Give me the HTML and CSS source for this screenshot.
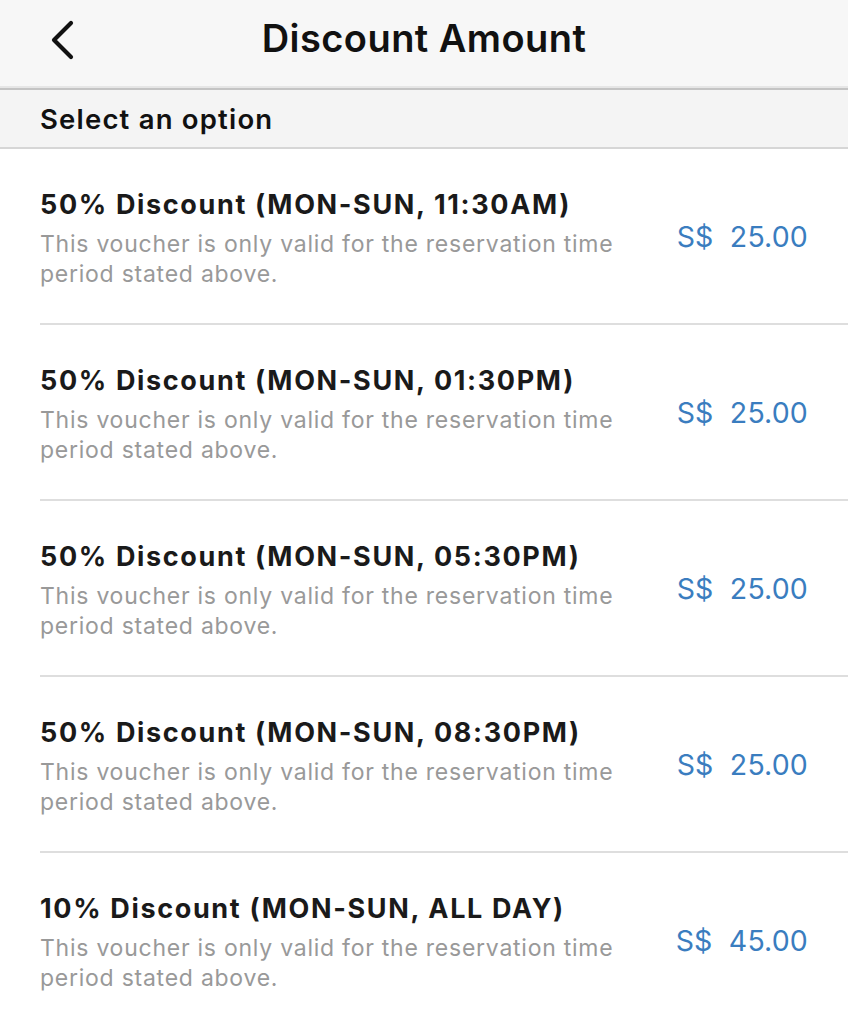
FILE: index.html
```html
<!DOCTYPE html>
<html>
<head>
<meta charset="utf-8">
<link rel="stylesheet" href="styles.css">
</head>
<body>
<div class="screen">
  <header class="navbar">
    <button class="back" aria-label="Back">
      <svg width="30" height="40" viewBox="0 0 30 40"><path d="M22 3 L5 20 L22 37" fill="none" stroke="#111" stroke-width="4.2" stroke-linecap="round" stroke-linejoin="round"/></svg>
    </button>
    <h1 class="title">Discount Amount</h1>
  </header>
  <div class="section">Select an option</div>
  <ul class="list">
    <li class="item">
      <div class="info">
        <div class="name">50% Discount (MON-SUN, 11:30AM)</div>
        <div class="desc">This voucher is only valid for the reservation time period stated above.</div>
      </div>
      <div class="price">S$&nbsp; 25.00</div>
    </li>
    <li class="item">
      <div class="info">
        <div class="name">50% Discount (MON-SUN, 01:30PM)</div>
        <div class="desc">This voucher is only valid for the reservation time period stated above.</div>
      </div>
      <div class="price">S$&nbsp; 25.00</div>
    </li>
    <li class="item">
      <div class="info">
        <div class="name">50% Discount (MON-SUN, 05:30PM)</div>
        <div class="desc">This voucher is only valid for the reservation time period stated above.</div>
      </div>
      <div class="price">S$&nbsp; 25.00</div>
    </li>
    <li class="item">
      <div class="info">
        <div class="name">50% Discount (MON-SUN, 08:30PM)</div>
        <div class="desc">This voucher is only valid for the reservation time period stated above.</div>
      </div>
      <div class="price">S$&nbsp; 25.00</div>
    </li>
    <li class="item">
      <div class="info">
        <div class="name">10% Discount (MON-SUN, ALL DAY)</div>
        <div class="desc">This voucher is only valid for the reservation time period stated above.</div>
      </div>
      <div class="price">S$&nbsp; 45.00</div>
    </li>
  </ul>
</div>
</body>
</html>
```
FILE: styles.css
```css
* { box-sizing: border-box; }
html, body { margin: 0; padding: 0; background: #fff; }
body { font-family: Inter, "Liberation Sans", Arial, sans-serif; color: #111; }
.screen { width: 848px; height: 1024px; overflow: hidden; background: #fff; }

.navbar {
  height: 90px;
  background: #f7f7f7;
  border-bottom: 2px solid #c4c4c4;
  box-shadow: inset 0 -4px 0 -2px #e6e6e6;
  display: flex;
  align-items: center;
  justify-content: center;
  position: relative;
}
.back {
  position: absolute;
  left: 49px;
  top: 20px;
  background: none;
  border: 0;
  padding: 0;
  width: 30px;
  height: 40px;
}
.back svg { display: block; }
.title {
  margin: 0;
  font-size: 38px;
  font-weight: 600;
  letter-spacing: 0.45px;
  color: #111;
  margin-top: -12px;
}

.section {
  height: 59px;
  background: #f4f4f4;
  border-bottom: 2px solid #d6d6d6;
  padding-left: 40px;
  display: flex;
  align-items: center;
  font-size: 27.5px;
  font-weight: 600;
  letter-spacing: 1.2px;
  color: #111;
}

.list { list-style: none; margin: 0; padding: 0 0 0 40px; }
.item {
  height: 176px;
  border-bottom: 2px solid #dedede;
  display: flex;
  align-items: center;
  padding-right: 40px;
}
.info { flex: 1; padding-top: 4px; }
.name {
  font-size: 27px;
  font-weight: 700;
  color: #1a1a1a;
  letter-spacing: 1.65px;
  line-height: 34px;
  margin-bottom: 7px;
}
.desc {
  width: 610px;
  font-size: 23px;
  color: #999;
  line-height: 30px;
  letter-spacing: 0.75px;
}
.price {
  font-size: 28.5px;
  color: #3a7dbf;
  white-space: nowrap;
  letter-spacing: 0.15px;
  margin-top: 0;
}
```
